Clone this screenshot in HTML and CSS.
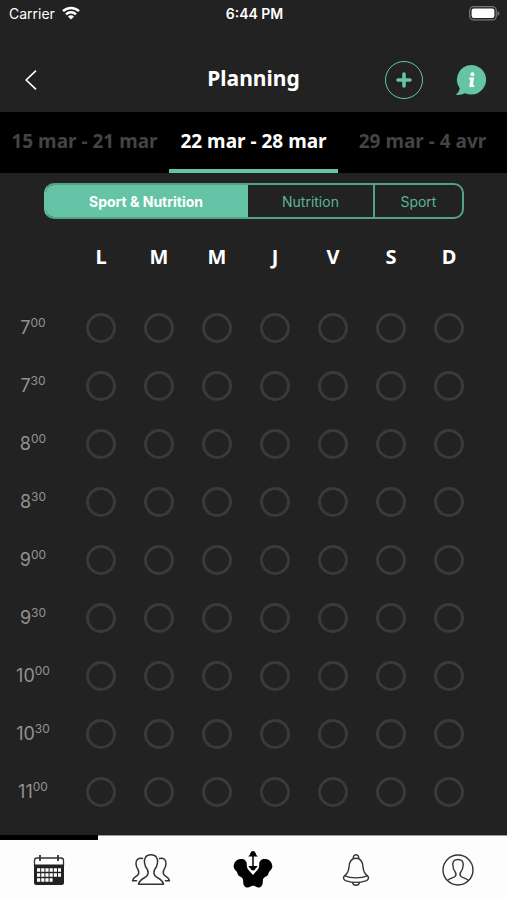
FILE: index.html
```html
<!DOCTYPE html>
<html lang="fr">
<head>
<meta charset="utf-8">
<meta name="viewport" content="width=device-width, initial-scale=1">
<title>Planning</title>
<link rel="stylesheet" href="styles.css">
</head>
<body>
<div class="status">
  <div class="status-left">
    <span>Carrier</span>
    <svg class="wifi" viewBox="0 0 18 14" width="18" height="14" aria-hidden="true">
      <path d="M1 5.2a11.5 11.5 0 0 1 16 0M4 8.3a7.2 7.2 0 0 1 10 0" fill="none" stroke="#fff" stroke-width="2.5"/>
      <path d="M9 13.6 5.9 10.5a4.4 4.4 0 0 1 6.2 0z" fill="#fff"/>
    </svg>
  </div>
  <time class="status-time">6:44 PM</time>
  <div class="status-right">
    <svg viewBox="0 0 31 15" width="31" height="15" aria-hidden="true">
      <rect x=".7" y=".7" width="26.6" height="13.2" rx="4" fill="none" stroke="#777" stroke-width="1.3"/>
      <rect x="2.6" y="2.6" width="22.8" height="9.4" rx="2.2" fill="#fff"/>
      <path d="M28.6 5v5q1.8-.8 1.8-2.5T28.6 5z" fill="#777"/>
    </svg>
  </div>
</div>

<header class="header">
  <button class="icon-button back" type="button" aria-label="Retour">
    <svg viewBox="0 0 12 20" width="12" height="20"><path d="M11 .7 1.2 10 11 19.3" fill="none" stroke="#fff" stroke-width="1.6"/></svg>
  </button>
  <h1 class="title">Planning</h1>
  <div class="actions">
    <button class="icon-button add" type="button" aria-label="Ajouter">
      <svg viewBox="0 0 16 16" width="16" height="16"><path d="M8 2v12M2 8h12" stroke="#65c4a5" stroke-width="3.6" stroke-linecap="round"/></svg>
    </button>
    <button class="icon-button" type="button" aria-label="Informations">
      <svg viewBox="0 0 32 32" width="32" height="32">
        <path d="M16.800 1A14.800 14.800 0 1 1 10 29.200Q6 31.300.8 30.800 4.300 28 4.800 24.500A14.800 14.800 0 0 1 16.800 1z" fill="#65c4a5"/>
        <circle cx="17.400" cy="10.200" r="2" fill="#fff"/>
        <path d="M14.400 13.400h4.800l-1.300 7.400h1.300v2.200h-5l1.300-7.400h-1.400z" fill="#fff"/>
      </svg>
    </button>
  </div>
</header>

<nav class="weeks" aria-label="Semaines">
  <a class="week" href="#prev">15 mar - 21 mar</a>
  <a class="week week-active" href="#current" aria-current="true">22 mar - 28 mar</a>
  <a class="week" href="#next">29 mar - 4 avr</a>
</nav>

<main class="content">
  <div class="segments" role="group" aria-label="Filtre">
    <button class="segment segment-wide segment-active" type="button" aria-pressed="true">Sport &amp; Nutrition</button>
    <button class="segment segment-medium" type="button" aria-pressed="false">Nutrition</button>
    <button class="segment segment-small" type="button" aria-pressed="false">Sport</button>
  </div>
  <table class="planning">
    <thead>
      <tr>
        <td class="time-column"></td>
        <th scope="col">L</th><th scope="col">M</th><th scope="col">M</th><th scope="col">J</th><th scope="col">V</th><th scope="col">S</th><th scope="col">D</th>
      </tr>
    </thead>
    <tbody id="slots"></tbody>
  </table>
</main>

<nav class="tabbar" aria-label="Navigation">
  <a class="tab tab-active" href="#planning" aria-label="Planning">
    <svg viewBox="0 0 32 32" width="32" height="32">
      <path d="M1.500 12V6.500Q1.500 4 4 4h24q2.500 0 2.500 2.500V12" fill="#fff" stroke="#333" stroke-width="1.300"/>
      <path d="M1 10.500h30v18Q31 31 28.500 31h-25Q1 31 1 28.500z" fill="#222"/>
      <path d="M7 1v6M25 1v6" stroke="#333" stroke-width="1.800"/>
      <path d="M4 16h24M4 21h24M4 26h15.600" stroke="#fff" stroke-width="3.600" stroke-dasharray="3.200 1"/>
    </svg>
  </a>
  <a class="tab" href="#community" aria-label="Communauté">
    <svg viewBox="0 0 40 34" width="40" height="34" fill="none" stroke="#333" stroke-width="1.500" stroke-linecap="round" stroke-linejoin="round">
      <path d="M20 1.800c-5.500 0-7 4-6.500 8 .3 3 1.300 5 3 7 1 2 .8 4-.5 6-2 2.500-7.500 3-8.500 8.400h25c-1-5.400-6.500-5.900-8.500-8.400-1.300-2-1.500-4-.5-6 1.700-2 2.700-4 3-7 .5-4-1-8-6.500-8z"/>
      <path d="M11.500 5.500C7 4.500 4.500 7.500 5 11c.2 2.500 1 4.300 2.200 6 1 2 .6 3.800-.7 5.300-1.800 1.300-4.300 2-5 5.500h4"/>
      <path d="M28.500 5.500C33 4.500 35.500 7.500 35 11c-.2 2.500-1 4.300-2.200 6-1 2-.6 3.800.7 5.300 1.800 1.300 4.300 2 5 5.500h-4"/>
    </svg>
  </a>
  <a class="tab" href="#home" aria-label="Accueil">
    <svg viewBox="0 0 40 44" width="40" height="44">
      <path d="M7.500 11C11.500 10.700 14 13 13.800 16.500c-.1 2.500.5 4.500 2.700 6.500l3.500 4 3.500-4c2.200-2 2.800-4 2.700-6.500C26 13 28.500 10.700 32.500 11c5 .5 7.800 5.500 6.500 9-.8 2.400-3 3-3.400 5-.4 2.400-1.500 3.200-3.600 4-1.400.8-2.200 2-2.200 4.500 0 3.500-1.300 6-4.300 6-2.500 0-3-1.800-5.500-1.800s-3 1.800-5.500 1.800c-3 0-4.300-2.500-4.300-6C10.200 31 9.400 29.800 8 29c-2.100-.8-3.200-1.600-3.600-4C4 23 1.800 22.400 1 20c-1.300-3.500 1.500-8.500 6.500-9z"/>
      <path d="M20 5v15" stroke="#000" stroke-width="1.500"/>
      <path d="M15.200 8.500Q17 7.500 17.400 5 18 3 20 3t2.600 2q.4 2.500 2.200 3.500zM15.500 18h9q-.2 1.500-1.600 2-1 2.500-2.900 2.500t-2.900-2.500q-1.400-.5-1.600-2z"/>
    </svg>
  </a>
  <a class="tab" href="#alerts" aria-label="Notifications">
    <svg viewBox="0 0 28 32" width="28" height="32" fill="none" stroke="#333" stroke-width="1.400" stroke-linejoin="round">
      <path d="M11.500 4.500a2.700 2.700 0 1 1 5 0"/>
      <path d="M14 4.300c-5.500 0-6.800 4.500-7.100 9.200-.3 4.500-1.800 6.500-4.400 8.300-2 2-.8 4 1.700 5 5.800 1.900 13.800 1.900 19.600 0 2.500-1 3.700-3 1.700-5-2.600-1.800-4.100-3.800-4.400-8.300-.3-4.700-1.600-9.200-7.100-9.200z"/>
      <path d="M2.500 21.800c6.500 2.700 16.500 2.700 23 0M10.500 28.200c.3 4 6.700 4 7 0"/>
    </svg>
  </a>
  <a class="tab" href="#profile" aria-label="Profil">
    <svg viewBox="0 0 32 32" width="32" height="32" fill="none" stroke="#333" stroke-width="1.400">
      <circle cx="16" cy="16" r="15"/>
      <path d="M5.500 26.500c2-2 5.500-2.400 7.500-4 1.300-1.300 1.200-3 .2-4.500-1.700-2-2.200-4-2.400-7-.2-3.700 1.700-5.500 5.200-5.500s5.400 1.800 5.200 5.500c-.2 3-.7 5-2.400 7-1 1.500-1.100 3.200.2 4.500 2 1.600 5.500 2 7.500 4"/>
    </svg>
  </a>
</nav>
<script src="script.js"></script>
</body>
</html>
```
FILE: styles.css
```css
* {
  box-sizing: border-box;
}

body {
  margin: 0;
  min-height: 100vh;
  display: flex;
  flex-direction: column;
  background: #222;
  color: #fff;
  font-family: Inter, "Liberation Sans", sans-serif;
}

button {
  font: inherit;
  cursor: pointer;
}

svg {
  display: block;
}

.status {
  display: grid;
  grid-template-columns: 1fr auto 1fr;
  align-items: center;
  height: 26px;
  padding: 0 7px 0 9px;
  font-size: 14px;
}

.status-left {
  display: flex;
  align-items: center;
  gap: 7px;
}

.status-time {
  font-weight: 600;
}

.status-right {
  justify-self: end;
}

.header {
  display: grid;
  grid-template-columns: 1fr auto 1fr;
  align-items: center;
  height: 86px;
  padding: 22px 20px 0;
}

.icon-button {
  display: grid;
  place-items: center;
  padding: 0;
  border: 0;
  background: none;
}

.back {
  width: 22px;
  height: 40px;
}

.title {
  margin: 0;
  padding-bottom: 4px;
  font: 700 21px/28px "Noto Sans", sans-serif;
}

.actions {
  display: flex;
  align-items: center;
  justify-self: end;
  gap: 32px;
}

.add {
  width: 38px;
  height: 38px;
  border: 1px solid #65c4a5;
  border-radius: 50%;
}

.weeks {
  display: grid;
  grid-template-columns: repeat(3, 1fr);
  height: 61px;
  background: #000;
}

.week {
  display: grid;
  place-items: center;
  border-bottom: 4px solid transparent;
  color: #444;
  font: 700 19px/24px "Noto Sans", sans-serif;
  text-decoration: none;
  white-space: nowrap;
}

.week-active {
  border-color: #65c4a5;
  color: #fff;
}

.content {
  flex: 1;
  padding-top: 10px;
}

.segments {
  display: flex;
  height: 36px;
  margin: 0 43px 0 44px;
  border: 2px solid #52a189;
  border-radius: 10px;
  overflow: hidden;
}

.segment {
  padding: 0;
  border: 0;
  border-left: 2px solid #52a189;
  background: none;
  color: #5bb497;
  font-size: 14px;
}

.segment-wide {
  flex: 202 1 0;
}

.segment-medium {
  flex: 126 1 0;
}

.segment-small {
  flex: 88 1 0;
}

.segment-active {
  border: 0;
  background: #65c4a5;
  color: #fff;
  font-weight: 700;
}

.segments:has(.segment-wide.segment-active) {
  border-left-color: #65c4a5;
}

.segment-active + .segment {
  border-left-color: #65c4a5;
}

.planning {
  width: calc(100% - 29px);
  table-layout: fixed;
  border-collapse: collapse;
}

.planning td,
.planning th {
  height: 58px;
  padding: 0;
  text-align: center;
}

.planning thead td,
.planning thead th {
  height: 80px;
  padding-bottom: 4px;
  font: 700 20px/28px "Noto Sans", sans-serif;
}

.time-column {
  width: 72px;
}

.planning .time {
  padding-right: 6px;
  color: #929292;
  font-size: 18px;
  font-weight: 400;
  line-height: 24px;
}

.time sup {
  font-size: 12px;
  line-height: 1;
}

.slot {
  display: block;
  width: 30px;
  height: 30px;
  margin: 0 auto;
  padding: 0;
  border: 3px solid #3a3a3a;
  border-radius: 50%;
  background: none;
}

.tabbar {
  display: grid;
  grid-template-columns: repeat(5, 1fr);
  column-gap: 4px;
  height: 65px;
  border-top: 1px solid #999;
  background: #fdfdfd;
}

.tab {
  position: relative;
  display: grid;
  place-items: center;
  padding-top: 4px;
}

.tab-active::before {
  content: "";
  position: absolute;
  top: -1px;
  left: 0;
  right: 0;
  height: 5px;
  background: #000;
}
```
FILE: script.js
```js
const days = ["lundi", "mardi", "mercredi", "jeudi", "vendredi", "samedi", "dimanche"];
const times = [[7, "00"], [7, "30"], [8, "00"], [8, "30"], [9, "00"], [9, "30"], [10, "00"], [10, "30"], [11, "00"]];

document.getElementById("slots").innerHTML = times.map(([hour, minutes]) => {
  const cells = days.map(day =>
    `<td><button class="slot" type="button" aria-label="${day} ${hour}:${minutes}"></button></td>`
  ).join("");
  return `<tr><th class="time" scope="row">${hour}<sup>${minutes}</sup></th>${cells}</tr>`;
}).join("");
```
